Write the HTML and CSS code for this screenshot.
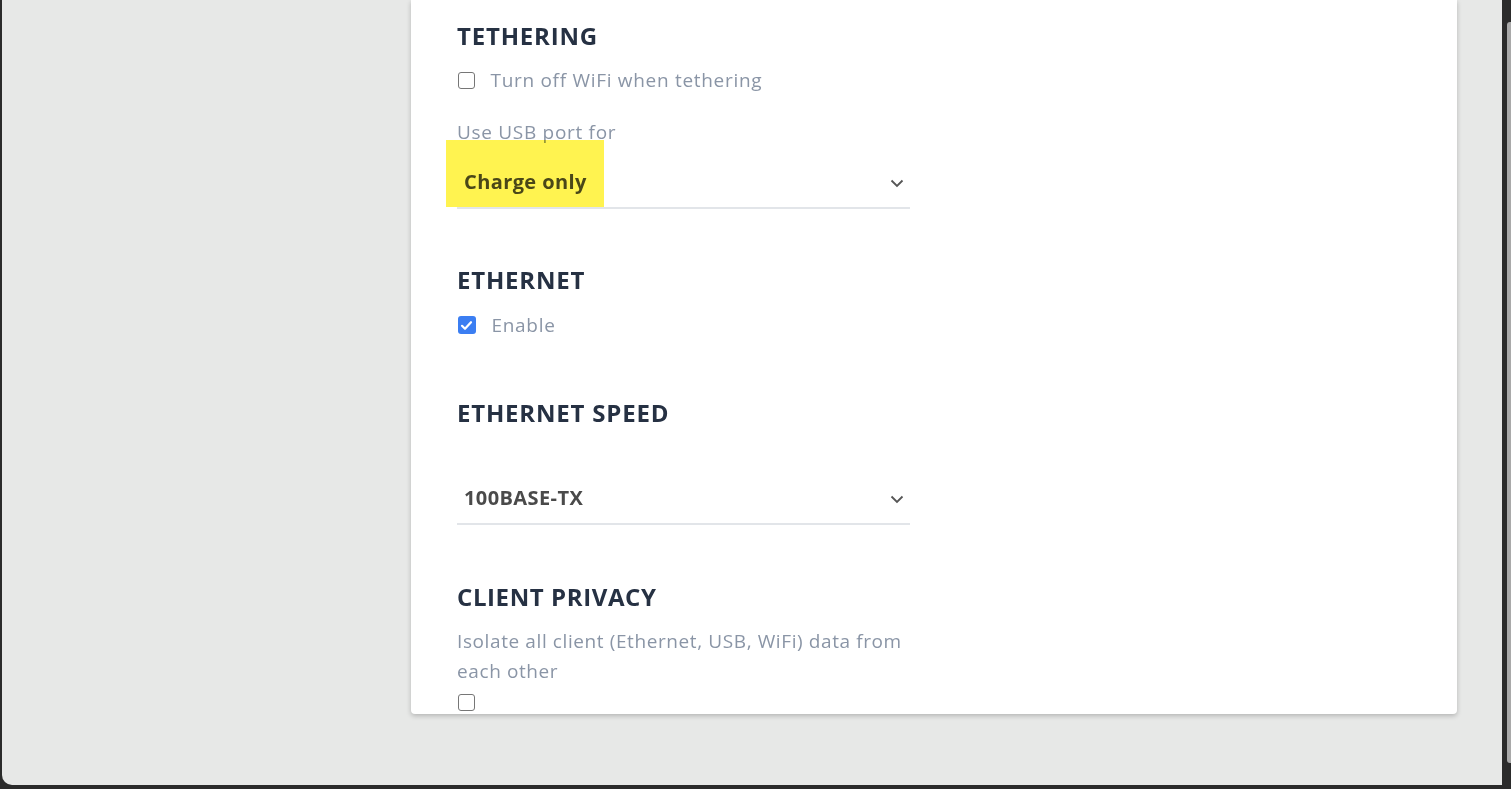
FILE: index.html
```html
<!DOCTYPE html>
<html>
<head>
<meta charset="utf-8">
<link rel="stylesheet" href="styles.css">
</head>
<body>
<div class="frame">
  <div class="window">
    <div class="card">
      <h2 class="heading h-teth">TETHERING</h2>
      <label class="check-row r-wifi"><span class="box"></span><span class="check-label">Turn off WiFi when tethering</span></label>
      <div class="field-label">Use USB port for</div>
      <div class="select s-usb">
        <span class="select-value">Charge only</span>
        <svg class="chev" width="14" height="9" viewBox="0 0 14 9"><path d="M1.5 1.5 L7 7 L12.5 1.5" fill="none" stroke="#555" stroke-width="1.8"/></svg>
        <span class="highlight"></span>
      </div>
      <h2 class="heading h-eth">ETHERNET</h2>
      <label class="check-row r-enable"><span class="box checked"><svg width="17" height="17" viewBox="0 0 17 17"><path d="M4 8.8 L7 11.8 L13 5.2" fill="none" stroke="#fff" stroke-width="2.2" stroke-linecap="round" stroke-linejoin="round"/></svg></span><span class="check-label">Enable</span></label>
      <h2 class="heading h-speed">ETHERNET SPEED</h2>
      <div class="select s-speed">
        <span class="select-value">100BASE-TX</span>
        <svg class="chev" width="14" height="9" viewBox="0 0 14 9"><path d="M1.5 1.5 L7 7 L12.5 1.5" fill="none" stroke="#555" stroke-width="1.8"/></svg>
      </div>
      <h2 class="heading h-priv">CLIENT PRIVACY</h2>
      <p class="desc">Isolate all client (Ethernet, USB, WiFi) data from each other</p>
      <span class="box solo"></span>
    </div>
  </div>
  <div class="sidebar"><div class="thumb"></div></div>
</div>
</body>
</html>
```
FILE: styles.css
```css
html, body {
  margin: 0;
  padding: 0;
  background: #2b2b2b;
  overflow: hidden;
}
.frame {
  display: flex;
  width: 1511px;
  height: 789px;
}
.window {
  width: 1500px;
  height: 785px;
  margin-left: 2px;
  background: #e7e8e7;
  border-bottom-left-radius: 10px;
  overflow: hidden;
}
.sidebar {
  flex: 1;
  position: relative;
}
.thumb {
  position: absolute;
  right: 0;
  top: 22px;
  bottom: 26px;
  width: 4px;
  background: #a9a9a9;
  border-radius: 3px 0 0 3px;
}
.card {
  margin-left: 409px;
  width: 1046px;
  height: 714px;
  padding: 20px 0 0 46px;
  box-sizing: border-box;
  background: #fff;
  border-radius: 0 0 4px 4px;
  box-shadow: 0 2px 5px rgba(0,0,0,0.22);
  overflow: hidden;
  font-family: "Open Sans", sans-serif;
}
.heading {
  margin: 0;
  font-family: "Open Sans", sans-serif;
  font-weight: 700;
  font-size: 24px;
  line-height: 32px;
  color: #263143;
  letter-spacing: 0.8px;
}
.h-priv { letter-spacing: 0.6px; }
.check-row {
  display: flex;
  align-items: center;
  height: 30px;
  margin-top: 13px;
}
.box {
  width: 15px;
  height: 15px;
  border: 1.5px solid #767676;
  border-radius: 3px;
  flex: none;
  margin-left: 0.5px;
  display: block;
}
.box.checked {
  border: none;
  width: 18px;
  height: 18px;
  background: #3b7ef2;
}
.box.checked svg { display: block; margin: 0.5px; }
.check-label {
  margin-left: 16px;
  font-size: 19px;
  color: #8a95a6;
  letter-spacing: 0.7px;
}
.field-label {
  margin-top: 22px;
  line-height: 30px;
  font-size: 19px;
  letter-spacing: 0.7px;
  color: #8a95a6;
}
.select {
  position: relative;
  height: 50px;
  width: 440px;
  border-bottom: 2.5px solid #e2e5e9;
  display: flex;
  align-items: center;
  justify-content: space-between;
  padding: 0 6px 1px 7px;
}
.s-usb { margin-top: 9px; }
.select-value {
  font-weight: 700;
  font-size: 20px;
  letter-spacing: 0.4px;
  color: #4a4a4a;
}
.chev { display: block; margin-top: 4px; }
.highlight {
  position: absolute;
  left: -11px;
  top: -16px;
  width: 158px;
  height: 67px;
  background: #fff350;
  mix-blend-mode: multiply;
}
.h-eth { margin-top: 55px; }
.r-enable { margin-top: 14px; }
.h-speed { margin-top: 57px; }
.s-speed { margin-top: 43px; }
.h-priv { margin-top: 56px; }
.desc {
  margin: 13px 0 0 0;
  width: 453px;
  font-size: 19px;
  letter-spacing: 0.6px;
  line-height: 30px;
  color: #8a95a6;
}
.solo { margin-top: 8px; }
```
